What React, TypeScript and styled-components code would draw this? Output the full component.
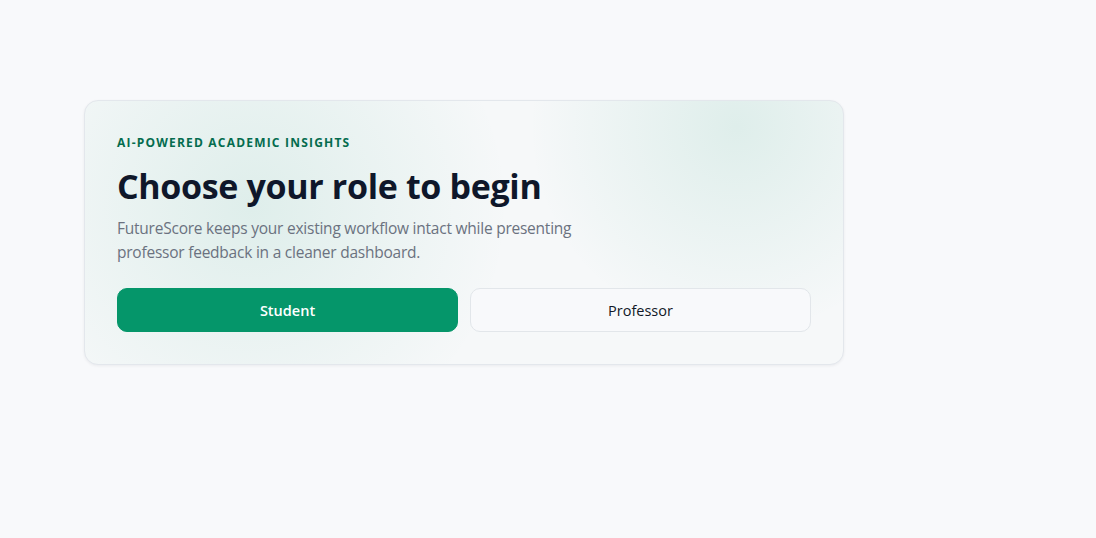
import React from 'react';
import styled, { createGlobalStyle } from 'styled-components';

const GlobalStyle = createGlobalStyle`
  html, body {
    margin: 0;
    padding: 0;
    background: #f8f9fb;
    font-family: 'Open Sans', 'Noto Sans', Arial, sans-serif;
    color: #0f172a;
  }
  * {
    box-sizing: border-box;
  }
`;

const Page = styled.main`
  min-height: 538px;
  padding: 100px 84px;
`;

const Card = styled.section`
  width: 760px;
  padding: 32px;
  border: 1px solid #e3e7ec;
  border-radius: 14px;
  background:
    radial-gradient(circle at 22% 40%, rgba(16, 150, 110, 0.1), transparent 42%),
    radial-gradient(circle at 86% 10%, rgba(16, 150, 110, 0.1), transparent 30%),
    #f6f8f9;
  box-shadow: 0 1px 3px rgba(15, 23, 42, 0.06);
`;

const Eyebrow = styled.p`
  margin: 0;
  font-size: 12px;
  font-weight: 700;
  letter-spacing: 0.1em;
  text-transform: uppercase;
  color: #046c4e;
  line-height: 19px;
`;

const Title = styled.h1`
  margin: 12px 0 0;
  font-size: 34px;
  font-weight: 700;
  line-height: 44px;
  letter-spacing: -0.01em;
  color: #0f172a;
`;

const Lead = styled.p`
  margin: 8px 0 0;
  max-width: 480px;
  font-size: 15.5px;
  line-height: 24px;
  letter-spacing: -0.015em;
  color: #6b7280;
`;

const Actions = styled.div`
  display: grid;
  grid-template-columns: 1fr 1fr;
  gap: 12px;
  margin-top: 24px;
`;

const RoleButton = styled.button<{ $primary?: boolean }>`
  height: 44px;
  border-radius: 10px;
  font-family: inherit;
  font-size: 14.5px;
  font-weight: ${(p) => (p.$primary ? 600 : 500)};
  cursor: pointer;
  border: 1px solid ${(p) => (p.$primary ? '#05966a' : '#e2e6ea')};
  background: ${(p) => (p.$primary ? '#05966a' : '#f8f9fb')};
  color: ${(p) => (p.$primary ? '#ffffff' : '#111827')};
`;

export default function App() {
  return (
    <>
      <GlobalStyle />
      <Page>
        <Card>
          <Eyebrow>AI-powered academic insights</Eyebrow>
          <Title>Choose your role to begin</Title>
          <Lead>
            FutureScore keeps your existing workflow intact while presenting
            professor feedback in a cleaner dashboard.
          </Lead>
          <Actions>
            <RoleButton $primary>Student</RoleButton>
            <RoleButton>Professor</RoleButton>
          </Actions>
        </Card>
      </Page>
    </>
  );
}
